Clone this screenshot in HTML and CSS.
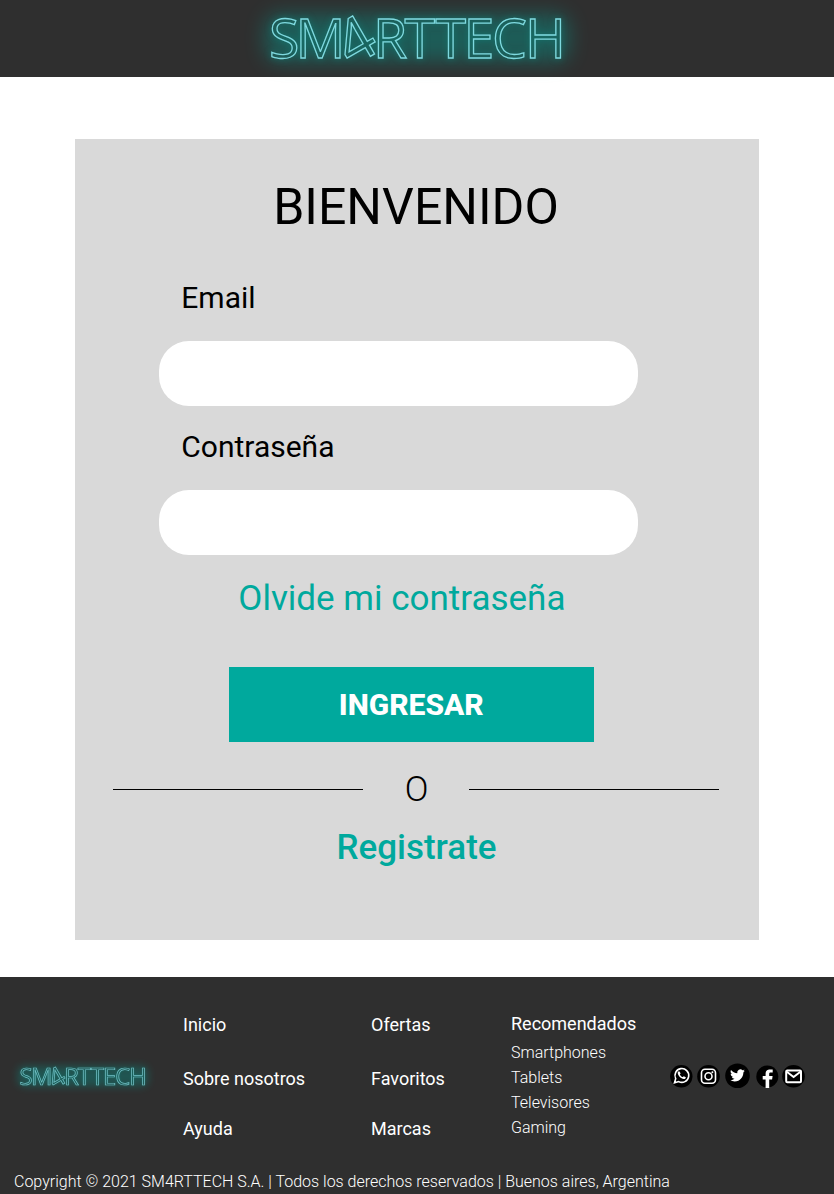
FILE: index.html
```html
<!DOCTYPE html>
<html lang="es">
<head>
<meta charset="utf-8">
<title>SM4RTTECH</title>
<link rel="stylesheet" href="styles.css">
</head>
<body>
<header class="header">
  <svg class="logo" viewBox="-30 -16 352 77" role="img" aria-label="SM4RTTECH">
    <rect class="glow" x="-6" y="-2" width="304" height="48" rx="14"/>
    <g class="letters">
      <text class="logo-text" y="42.200" x="-2 24.500">SM</text>
      <text class="logo-text four" transform="translate(80 51.500) rotate(-30)">4</text>
      <text class="logo-text" y="42.200" x="102 133.500 164.500 192.500 221 254">RTTECH</text>
    </g>
  </svg>
</header>
<main class="main">
  <form class="card">
    <h1 class="title">BIENVENIDO</h1>
    <label class="label" for="email">Email</label>
    <input class="field" id="email" type="email">
    <label class="label" for="password">Contraseña</label>
    <input class="field" id="password" type="password">
    <a class="forgot">Olvide mi contraseña</a>
    <button class="submit" type="button">INGRESAR</button>
    <div class="divider"><span class="line"></span><span class="or">O</span><span class="line"></span></div>
    <a class="register">Registrate</a>
  </form>
</main>
<footer class="footer">
  <div class="footer-main">
    <svg class="logo logo-small" viewBox="-30 -16 352 77" role="img" aria-label="SM4RTTECH">
      <rect class="glow" x="-6" y="-2" width="304" height="48" rx="14"/>
      <g class="letters">
        <text class="logo-text" y="42.200" x="-2 24.500">SM</text>
        <text class="logo-text four" transform="translate(80 51.500) rotate(-30)">4</text>
        <text class="logo-text" y="42.200" x="102 133.500 164.500 192.500 221 254">RTTECH</text>
      </g>
    </svg>
    <nav class="links"><a>Inicio</a><a>Sobre nosotros</a><a>Ayuda</a></nav>
    <nav class="links"><a>Ofertas</a><a>Favoritos</a><a>Marcas</a></nav>
    <nav class="recommended"><h2>Recomendados</h2><a>Smartphones</a><a>Tablets</a><a>Televisores</a><a>Gaming</a></nav>
    <div class="social">
      <svg viewBox="0 0 136 26" aria-hidden="true">
        <circle cx="11.3" cy="13.3" r="11.2"/>
        <path class="stroke" d="M4.500 19.800l1.200-4.200A6.900 6.900 0 1 1 8.700 18.600z"/>
        <path class="fill" d="M9.200 8.300c-.5-.2-1.600.6-1.500 1.800.3 2.800 3.300 5.700 6 5.900 1.400.1 2.300-1 2.100-1.800l-2-1c-.6.1-.7.900-1.200.9-1.200-.4-2.400-1.500-2.700-2.600.2-.5.8-.7.7-1.200z"/>
        <circle cx="38.500" cy="13.300" r="11.300"/>
        <rect class="stroke" x="31.500" y="6.300" width="14" height="14" rx="3.500"/>
        <circle class="stroke" cx="38.500" cy="13.300" r="3.500"/>
        <circle class="fill" cx="42.400" cy="9.300" r="1"/>
        <circle cx="67.500" cy="12.700" r="12.300"/>
        <path class="fill" transform="translate(60 5) scale(.62)" d="M23.950 4.570a10 10 0 0 1-2.820.770 4.960 4.960 0 0 0 2.160-2.720c-.95.550-2 .95-3.130 1.180a4.920 4.920 0 0 0-8.380 4.480C7.690 8.090 4.070 6.130 1.640 3.160a4.820 4.820 0 0 0-.67 2.480c0 1.710.87 3.210 2.190 4.100a4.900 4.900 0 0 1-2.230-.620v.06a4.920 4.920 0 0 0 3.950 4.830 5 5 0 0 1-2.210.080 4.940 4.940 0 0 0 4.600 3.420A9.870 9.870 0 0 1 0 19.540a14 14 0 0 0 7.550 2.210c9.050 0 14-7.500 14-13.980 0-.210 0-.420-.020-.630a9.940 9.940 0 0 0 2.460-2.550z"/>
        <circle cx="97.300" cy="13.500" r="11"/>
        <path class="fill" d="M95.600 25v-8.500h-2.900V13h2.900v-2.300c0-3.200 1.900-4.300 4.400-4.300h2.700v3.100h-2c-1.300 0-1.500.6-1.500 1.600V13h3.400l-.5 3.500h-2.900V25z"/>
        <circle cx="123.500" cy="13.200" r="11.300"/>
        <rect class="stroke mail" x="116.200" y="7.500" width="14.800" height="11.800" rx="1"/>
        <path class="stroke mail" d="M116.800 8.800l6.800 5.200 6.800-5.200"/>
      </svg>
    </div>
  </div>
  <p class="copyright">Copyright © 2021 SM4RTTECH S.A. | Todos los derechos reservados | Buenos aires, Argentina</p>
</footer>
</body>
</html>
```
FILE: styles.css
```css
* { box-sizing: border-box; }
body { margin: 0; background: #fff; color: #000; font-family: Roboto, sans-serif; }
.header { display: flex; justify-content: center; height: 77px; background: #2f2f2f; }
.logo { display: block; width: 352px; height: 77px; overflow: visible; }
.glow { fill: #00a99d; opacity: .37; filter: blur(10px); }
.letters { filter: drop-shadow(0 0 3px rgba(0, 169, 157, .6)); }
.logo-text { font-family: "Open Sans", sans-serif; font-size: 55.5px; fill: none; stroke: #7ed9df; stroke-width: 1.3px; }
.four { font-size: 61px; }
.main { height: 900px; padding: 62px 75px 0; }
.card { display: flex; flex-direction: column; height: 801px; padding: 38px 38px 0; background: #d9d9d9; }
.title { margin: 0 2px 43px 0; font-size: 50px; font-weight: 400; line-height: 60px; text-align: center; }
.label { margin-left: 68.3px; font-size: 30px; line-height: 36px; }
.field { width: 479px; height: 65px; margin: 25px 0 23px 46px; padding: 0 28px; border: 0; border-radius: 30px; background: #fff; font: 400 26px Roboto, sans-serif; outline: 0; }
.forgot { margin-left: 125.3px; font-size: 35px; line-height: 42px; color: #00a99d; }
.submit { width: 365px; height: 75px; margin: 47px 0 0 116px; padding: 0 .5px 0 0; border: 0; background: #00a99d; color: #fff; font: 800 30px Roboto, sans-serif; }
.divider { display: flex; align-items: center; justify-content: space-between; width: 606px; height: 42px; margin-top: 26px; }
.line { width: 250px; height: 1px; background: #000; }
.or { padding: 1px 0 0 1px; font-size: 35px; font-weight: 300; line-height: 42px; }
.register { margin: 17px 1px 0 0; font-size: 35px; font-weight: 500; line-height: 42px; text-align: center; color: #00a99d; }
.footer { height: 217px; background: #2f2f2f; color: #fff; }
.footer-main { display: grid; grid-template-columns: 183px 188px 140px 158px 165px; align-items: start; height: 193px; }
.logo-small { width: 152px; height: 33px; margin: 83px 0 0 7px; opacity: .85; }
.logo-small .logo-text { stroke-width: 1.7px; }
.links { display: grid; grid-template-rows: 54px 50px 22px; padding-top: 37px; font-size: 18px; line-height: 22px; }
.recommended { display: flex; flex-direction: column; padding-top: 36px; font-size: 16px; font-weight: 300; line-height: 25px; }
.recommended h2 { margin: 0 0 5px; font-size: 18px; font-weight: 400; line-height: 22px; }
.social { padding-top: 86px; }
.social svg { display: block; width: 136px; height: 26px; margin-left: 1px; }
.fill { fill: #fff; }
.stroke { fill: none; stroke: #fff; stroke-width: 1.6px; }
.mail { stroke-width: 2px; }
.copyright { margin: 0 0 0 14px; padding-top: 1px; font-size: 16px; font-weight: 300; line-height: 22px; }
```
